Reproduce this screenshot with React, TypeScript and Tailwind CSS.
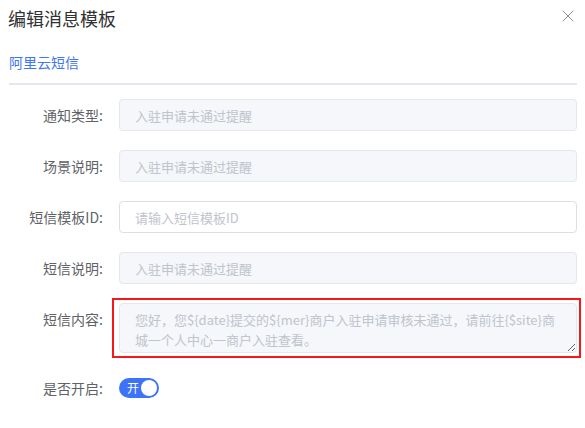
import { X } from "lucide-react";

const font = { fontFamily: '"Noto Sans CJK SC", "Noto Sans", sans-serif' };

const rows = [
  { label: "通知类型:", value: "入驻申请未通过提醒", disabled: true },
  { label: "场景说明:", value: "入驻申请未通过提醒", disabled: true },
  { label: "短信模板ID:", value: "请输入短信模板ID", disabled: false },
  { label: "短信说明:", value: "入驻申请未通过提醒", disabled: true },
];

const content =
  "您好，您${date}提交的${mer}商户入驻申请审核未通过，请前往{$site}商城一个人中心一商户入驻查看。";

function Label({ children }: { children: React.ReactNode }) {
  return (
    <div className="w-[94px] shrink-0 text-right text-[14px] leading-[32px] text-[#606266]">
      {children}
    </div>
  );
}

export default function App() {
  return (
    <div className="w-[585px] h-[428px] bg-white pl-[9px] pr-[8px] pt-[6px]" style={font}>
      {/* Header */}
      <div className="flex items-center justify-between">
        <h1 className="-ml-[1px] text-[18px] leading-[24px] text-[#303133]">编辑消息模板</h1>
        <X className="w-[20px] h-[20px] -mr-[1px] -mt-[4px] text-[#909399]" strokeWidth={1.2} />
      </div>

      {/* Tab */}
      <div className="mt-[19px] border-b-2 border-[#e4e7ed] pb-[10px]">
        <span className="text-[14px] leading-[20px] text-[#3f76f5]">阿里云短信</span>
      </div>

      {/* Form */}
      <div className="mt-[14px] flex flex-col gap-[19px]">
        {rows.map((r) => (
          <div key={r.label} className="flex gap-[16px]">
            <Label>{r.label}</Label>
            <input
              readOnly
              placeholder={r.value}
              className={`h-[32px] flex-1 rounded-[4px] border px-[15px] text-[13px] outline-none placeholder:text-[#c0c4cc] ${
                r.disabled ? "bg-[#f5f7fa] border-[#e4e7ed]" : "bg-white border-[#dcdfe6]"
              }`}
              style={font}
            />
          </div>
        ))}

        <div className="flex gap-[16px]">
          <Label>短信内容:</Label>
          <div className="relative flex-1">
            <textarea
              readOnly
              value={content}
              className="block h-[50px] w-full resize-y rounded-[4px] border border-[#e4e7ed] bg-[#f5f7fa] px-[15px] pt-[6px] pb-[2px] text-[13px] leading-[20px] text-[#c0c4cc] outline-none"
              style={font}
            />
            {/* annotation box */}
            <div className="pointer-events-none absolute -left-[7px] -right-[4px] -top-[5px] -bottom-[5px] border-2 border-[#f5181a]" />
          </div>
        </div>

        <div className="flex items-center gap-[16px]">
          <Label>是否开启:</Label>
          <div className="relative flex h-[20px] w-[40px] items-center rounded-full bg-[#3d73f6]">
            <span className="ml-[8px] text-[12px] leading-[20px] text-white">开</span>
            <span className="absolute right-[2px] top-[2px] h-[16px] w-[16px] rounded-full bg-white" />
          </div>
        </div>
      </div>
    </div>
  );
}
